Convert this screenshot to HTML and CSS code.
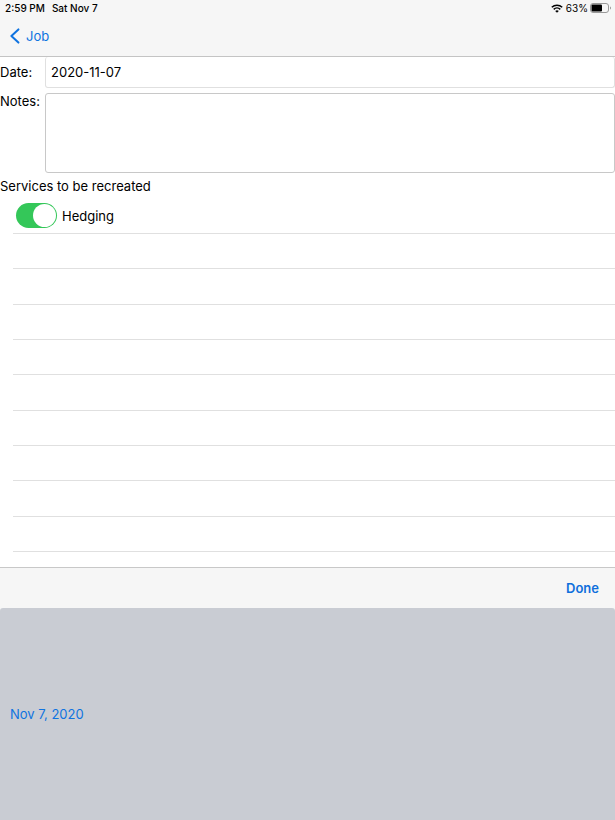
FILE: index.html
```
<!DOCTYPE html>
<html lang="en">
<head>
<meta charset="utf-8"/>
<meta name="viewport" content="width=device-width, initial-scale=1">
<title>Job</title>
<link rel="stylesheet" href="styles.css">
</head>

<body>
<header class="top">
    <div class="status">
        <span class="clock">2:59 PM</span>
        <span class="day">Sat Nov 7</span>
        <svg class="wifi" viewBox="0 0 12 9" width="12" height="9">
            <path d="M.8 3.3a7.4 7.4 0 0 1 10.4 0M2.7 5.4a4.7 4.7 0 0 1 6.6 0" fill="none" stroke="#000" stroke-width="1.5"/>
            <path d="M6 8.8L4.2 7a2.6 2.6 0 0 1 3.6 0z"/>
        </svg>
        <span>63%</span>
        <svg class="battery" viewBox="0 0 21 10" width="21" height="10">
            <rect x="0.5" y="0.5" width="18" height="9" rx="2.5" fill="none" stroke="#999"/>
            <rect x="1.5" y="1.5" width="10.5" height="7" rx="1"/>
            <path d="M20 3.5v3q1-.4 1-1.5t-1-1.5z" fill="#999"/>
        </svg>
    </div>
    <nav class="nav">
        <a class="back" href="#">
            <svg viewBox="0 0 10 16" width="10" height="16">
                <path d="M8.4 1.4L1.4 8l7 6.6" fill="none" stroke="currentColor" stroke-width="2" stroke-linecap="round" stroke-linejoin="round"/>
            </svg>
            Job
        </a>
    </nav>
</header>

<main class="form">
    <div class="fields">
        <label class="date-label" for="date">Date:</label>
        <input id="date" class="box date" type="text" value="2020-11-07">
        <label for="notes">Notes:</label>
        <textarea id="notes" class="box notes"></textarea>
    </div>
    <h1 class="heading">Services to be recreated</h1>
    <ul class="services">
        <li class="service">
            <input id="hedging" class="switch" type="checkbox" role="switch" checked>
            <label for="hedging">Hedging</label>
        </li>
        <li></li>
        <li></li>
        <li></li>
        <li></li>
        <li></li>
        <li></li>
        <li></li>
        <li></li>
        <li></li>
    </ul>
</main>

<footer class="picker">
    <div class="toolbar">
        <button type="button" class="done">Done</button>
    </div>
    <div class="wheel">
        <button type="button" class="value">Nov 7, 2020</button>
    </div>
</footer>
</body>
</html>
```

FILE: styles.css
```
* {
    box-sizing: border-box;
}
body {
    margin: 0;
    min-height: 100vh;
    display: flex;
    flex-direction: column;
    background: #fff;
    color: #000;
    font: 13px/16px Inter, "Liberation Sans", sans-serif;
}
button, input, textarea {
    font: inherit;
    color: inherit;
}
button {
    border: 0;
    padding: 0;
    background: none;
}
.top {
    background: #f6f6f6;
    border-bottom: 1px solid #c4c4c4;
}
.status {
    display: flex;
    align-items: center;
    height: 16px;
    padding: 0 4px 0 5px;
    font-size: 10px;
}
.clock, .day {
    font-weight: 500;
}
.day {
    margin: 0 auto 0 7px;
}
.wifi {
    margin-right: 3px;
}
.battery {
    margin-left: 2px;
}
.nav {
    display: flex;
    align-items: center;
    height: 40px;
    padding: 0 10px;
}
.back {
    display: flex;
    align-items: center;
    gap: 6px;
    color: #0f73e0;
    text-decoration: none;
}
.form {
    flex: 1;
    display: flex;
    flex-direction: column;
}
.fields {
    display: grid;
    grid-template-columns: 40px 1fr;
    gap: 5px;
}
.date-label {
    padding-top: 7px;
}
.box {
    display: block;
    width: 100%;
    border: 1px solid #c8c8c8;
    border-radius: 3px;
    background: #fff;
    outline: 0;
}
.date {
    height: 31px;
    padding: 0 5px;
    border-color: #e0e0e0;
    border-top: 0;
}
.notes {
    height: 80px;
    padding: 5px;
    resize: none;
}
.heading {
    margin: 5px 0 0;
    font-size: 13px;
    font-weight: 400;
}
.services {
    flex: 1;
    display: grid;
    grid-template-rows: 40px repeat(9, 1fr);
    margin: 0;
    padding: 0 0 15px 13px;
    list-style: none;
}
.services li {
    min-height: 30px;
    border-bottom: 1px solid #e0e0e0;
}
.service {
    display: flex;
    align-items: center;
    gap: 5px;
    padding: 4px 3px 0;
}
.switch {
    appearance: none;
    width: 41px;
    height: 25px;
    margin: 0;
    padding: 1px;
    border-radius: 13px;
    background: #ccc;
}
.switch::before {
    content: "";
    display: block;
    width: 23px;
    height: 23px;
    border-radius: 50%;
    background: #fff;
}
.switch:checked {
    background: #34c759;
}
.switch:checked::before {
    margin-left: auto;
}
.picker {
    background: #f6f6f6;
    border-top: 1px solid #c8c8c8;
}
.toolbar {
    display: flex;
    justify-content: flex-end;
    align-items: center;
    height: 40px;
    padding: 0 16px;
}
.done {
    color: #0f6fdc;
    font-weight: 600;
}
.wheel {
    display: flex;
    align-items: center;
    height: 212px;
    padding: 0 10px;
    border-radius: 3px 3px 0 0;
    background: #c9ccd3;
}
.value {
    color: #0f73e0;
}
```
